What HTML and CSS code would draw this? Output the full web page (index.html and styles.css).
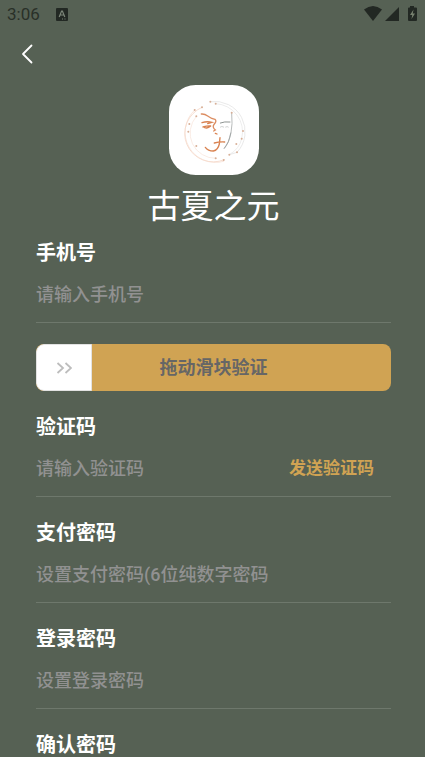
FILE: index.html
```html
<!DOCTYPE html>
<html lang="zh-CN">
<head>
    <meta charset="UTF-8">
    <meta name="viewport" content="width=device-width, initial-scale=1">
    <title>古夏之元</title>
    <link rel="stylesheet" href="styles.css">
</head>
<body>
<div class="status-bar">
    <span class="time">3:06</span>
    <svg class="app-icon" width="12" height="13" viewBox="0 0 12 13">
        <rect width="12" height="13" rx="1" fill="#222823"/>
        <path d="M3.2 9 5.6 3h.8l2.4 6M4 7h4" fill="none" stroke="#7b8578" stroke-width="1.2"/>
        <path d="M6 11h1M8.500 11h1" stroke="#7b8578"/>
    </svg>
    <svg class="signals" width="54" height="16" viewBox="0 0 54 16">
        <path d="M0 3.500Q9-3.500 18 3.500L9 15z" fill="#222823"/>
        <path d="M35 1v14H21z" fill="#222823"/>
        <path d="M46 0h4v1.500h2q1 0 1 1V14q0 1-1 1h-7q-1 0-1-1V2.500q0-1 1-1h1z" fill="#222823"/>
        <path d="M49.500 3.500 46 9h2.200l-.7 4 3.500-5.500h-2.200z" fill="#77816f"/>
    </svg>
</div>
<header class="nav">
    <button type="button" class="back" aria-label="返回">
        <svg width="12" height="20" viewBox="0 0 12 20">
            <path d="M10.500 1.500 2 10l8.500 8.500" fill="none" stroke="#fff" stroke-width="1.800" stroke-linecap="round" stroke-linejoin="round"/>
        </svg>
    </button>
</header>
<main class="content">
    <div class="brand">
        <svg class="logo" width="90" height="90" viewBox="24 16 270 270">
            <rect x="24" y="16" width="270" height="270" rx="80" fill="#fff"/>
            <g fill="none" stroke-linecap="round">
                <path d="M123 83A84 84 0 0 0 190 240" stroke="#f3cdb9" stroke-width="2"/>
                <path d="M101 91A91 91 0 0 0 188 245" stroke="#f6dccf" stroke-width="2"/>
                <path d="M106 110A76 76 0 0 0 165 236" stroke="#f4d8ca" stroke-width="1.500"/>
                <path d="M148 66A91 91 0 0 1 228 218L205 225" stroke="#dedede" stroke-width="2"/>
                <path d="M164 72A84 84 0 0 1 242 177Q236 207 205 225" stroke="#e4e4e4" stroke-width="2"/>
                <path d="M212 99Q219 170 190 206" stroke="#b9bcbc" stroke-width="3"/>
                <path d="M209 160Q205 190 190 206" stroke="#909696" stroke-width="2"/>
                <path d="M121 103Q131 102 140 109T162 119Q168 124 160 133T163 151L158 154" stroke="#dc8d61" stroke-width="4"/>
                <path d="M123 129Q138 124 153 128L140 132M126 142Q139 138 149 139M131 144Q141 147 148 140" stroke="#d98352" stroke-width="4"/>
                <path d="M178 130Q190 125 207 127" stroke="#8e9492" stroke-width="3"/>
                <path d="M178 142Q182 138 188 142M194 142Q199 139 202 142" stroke="#b6baba" stroke-width="2"/>
                <path d="M133 203Q141 214 157 214Q171 211 175 193L177 174M160 190Q175 186 191 187M163 161l5 2" stroke="#d98250" stroke-width="4"/>
            </g>
            <g fill="#d8b098">
                <circle cx="148" cy="66" r="3"/>
                <circle cx="164" cy="72" r="3"/>
                <circle cx="123" cy="83" r="3"/>
                <circle cx="101" cy="91" r="3"/>
                <circle cx="106" cy="110" r="3"/>
                <circle cx="85" cy="133" r="3"/>
                <circle cx="82" cy="156" r="3"/>
                <circle cx="106" cy="199" r="3"/>
                <circle cx="164" cy="236" r="3"/>
                <circle cx="188" cy="241" r="3"/>
                <circle cx="205" cy="225" r="3"/>
                <circle cx="228" cy="218" r="3"/>
                <circle cx="226" cy="193" r="3"/>
                <circle cx="242" cy="177" r="3"/>
                <circle cx="246" cy="154" r="3"/>
                <circle cx="212" cy="99" r="3"/>
            </g>
        </svg>
        <h1 class="brand-name">古夏之元</h1>
    </div>
    <form class="form">
        <div class="field">
            <label for="phone">手机号</label>
            <div class="field-row">
                <input type="tel" id="phone" placeholder="请输入手机号">
            </div>
        </div>
        <div class="slide">
            <input type="range" id="slide" class="slide-input" min="0" max="100" value="0">
            <label for="slide" class="slide-text">拖动滑块验证</label>
        </div>
        <div class="field">
            <label for="code">验证码</label>
            <div class="field-row">
                <input type="text" id="code" placeholder="请输入验证码">
                <button type="button" class="send">发送验证码</button>
            </div>
        </div>
        <div class="field">
            <label for="payPassword">支付密码</label>
            <div class="field-row">
                <input type="password" id="payPassword" placeholder="设置支付密码(6位纯数字密码">
            </div>
        </div>
        <div class="field">
            <label for="loginPassword">登录密码</label>
            <div class="field-row">
                <input type="password" id="loginPassword" placeholder="设置登录密码">
            </div>
        </div>
        <div class="field">
            <label for="confirmPassword">确认密码</label>
            <div class="field-row">
                <input type="password" id="confirmPassword">
            </div>
        </div>
    </form>
</main>
</body>
</html>
```
FILE: styles.css
```css
* {
    box-sizing: border-box;
}

body {
    display: flex;
    flex-direction: column;
    height: 100vh;
    margin: 0;
    background: #566154;
    color: #fff;
    font-family: Roboto, "Noto Sans CJK SC", sans-serif;
}

button, input {
    font-family: inherit;
    border: 0;
    padding: 0;
    background: none;
}

.status-bar {
    display: flex;
    flex: none;
    align-items: center;
    height: 28px;
    padding: 0 7px;
}

.time {
    color: #293028;
    font-size: 17px;
}

.app-icon {
    margin-left: 16px;
}

.signals {
    margin-left: auto;
}

.nav {
    display: flex;
    flex: none;
    align-items: center;
    height: 52px;
    padding: 0 19px;
}

.back {
    display: flex;
    padding: 0 2px;
}

.content {
    flex: 1;
    min-height: 0;
    overflow-y: auto;
    scrollbar-width: none;
    padding: 5px 34px 24px 36px;
}

.brand {
    display: flex;
    flex-direction: column;
    align-items: center;
}

.logo {
    display: block;
}

.brand-name {
    margin: 7px 0 12px;
    font-family: KaiTi, STKaiti, "Noto Sans CJK SC", sans-serif;
    font-size: 33px;
    font-weight: 400;
    line-height: 44px;
}

.form {
    display: flex;
    flex-direction: column;
    gap: 21px;
}

.field label {
    display: block;
    font-size: 20px;
    font-weight: 700;
    line-height: 30px;
}

.field-row {
    display: flex;
    align-items: center;
    padding: 11px 0 13px;
    border-bottom: 1px solid #6e786c;
}

.field-row input {
    flex: 1;
    min-width: 0;
    height: 30px;
    color: #fff;
    font-size: 18px;
    font-weight: 500;
    outline: none;
}

.field-row input::placeholder {
    color: #919191;
    opacity: 1;
}

.send {
    margin-right: 17px;
    color: #d0a353;
    font-size: 17px;
    font-weight: 700;
    line-height: 30px;
}

.slide {
    display: grid;
    height: 47px;
    border-radius: 8px;
    overflow: hidden;
    background: #d0a353;
}

.slide-input, .slide-text {
    grid-area: 1 / 1;
}

.slide-input {
    appearance: none;
    width: 100%;
    height: 47px;
    margin: 0;
}

.slide-input::-webkit-slider-thumb {
    appearance: none;
    width: 56px;
    height: 47px;
    border: 1px solid #e2e2e2;
    border-radius: 8px 0 0 8px;
    background: #fff url("data:image/svg+xml,%3Csvg xmlns='http://www.w3.org/2000/svg' width='16' height='12'%3E%3Cpath d='M1.500 1 7 6l-5.500 5M9.500 1 15 6l-5.500 5' fill='none' stroke='%23bdbdbd' stroke-width='1.800'/%3E%3C/svg%3E") center no-repeat;
}

.slide-text {
    place-self: center;
    color: #666;
    font-size: 18px;
    font-weight: 700;
    line-height: 24px;
    pointer-events: none;
}
```
